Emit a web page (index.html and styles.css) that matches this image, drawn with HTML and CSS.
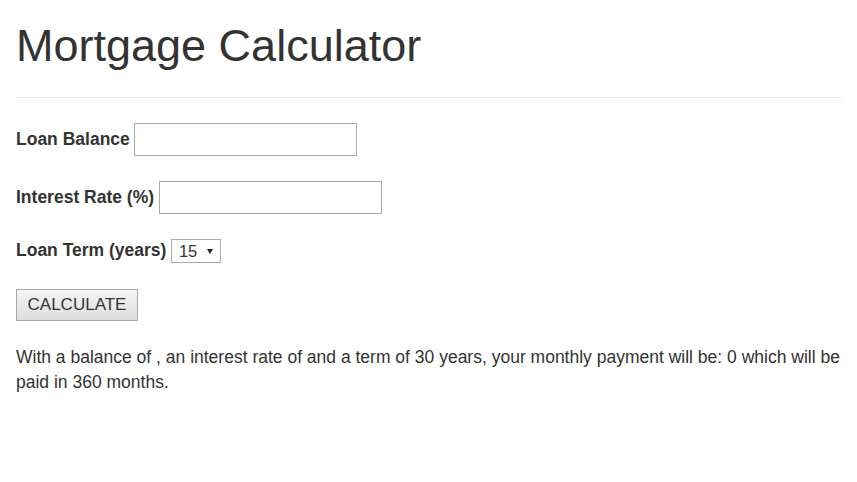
FILE: index.html
```html
<!DOCTYPE html>
<html lang="en">
<head>
<meta charset="utf-8">
<title>Mortgage Calculator</title>
<link rel="stylesheet" href="styles.css">
</head>
<body>
<div class="container">
  <h1 class="title">Mortgage Calculator</h1>
  <hr class="rule">
  <form class="calc">
    <div class="row">
      <label class="lbl" for="balance">Loan Balance</label>
      <input class="field" id="balance" type="text">
    </div>
    <div class="row">
      <label class="lbl" for="rate">Interest Rate (%)</label>
      <input class="field" id="rate" type="text">
    </div>
    <div class="row row-term">
      <label class="lbl" for="term">Loan Term (years)</label>
      <span class="select-wrap">
        <select class="term" id="term">
          <option>15</option>
          <option>30</option>
        </select>
        <svg class="arrow" width="6" height="5" viewBox="0 0 6 5" aria-hidden="true"><path d="M0 0H6L3 5Z" fill="#222"/></svg>
      </span>
    </div>
    <button class="btn" type="button">CALCULATE</button>
  </form>
  <p class="result">With a balance of , an interest rate of and a term of 30 years, your monthly payment will be: 0 which will be paid in 360 months.</p>
</div>
</body>
</html>
```
FILE: styles.css
```css
html, body {
  margin: 0;
  padding: 0;
  background: #fff;
}
body {
  font-family: "Liberation Sans", Arial, Helvetica, sans-serif;
  font-size: 17.5px;
  line-height: 25px;
  color: #333;
}
.container {
  padding: 0 14px 0 16px;
}
.title {
  margin: 21px 0 26.5px;
  font-size: 45px;
  line-height: 49.5px;
  font-weight: normal;
  color: #333;
}
.rule {
  margin: 0;
  height: 0;
  border: 0;
  border-top: 1px solid #eee;
}
.calc {
  display: flex;
  flex-direction: column;
  align-items: flex-start;
  padding-top: 25px;
}
.row {
  display: flex;
  align-items: center;
  gap: 4.5px;
  margin-bottom: 25px;
}
.row + .row-term {
  margin-top: -1px;
}
.lbl {
  font-weight: bold;
  line-height: 25px;
}
.field {
  box-sizing: border-box;
  width: 223px;
  height: 33px;
  margin: 0;
  padding: 2px 4px;
  border: 1px solid #a9a9a9;
  background: #fff;
  font: inherit;
}
.select-wrap {
  position: relative;
  display: inline-block;
  height: 24px;
}
.term {
  box-sizing: border-box;
  width: 50px;
  height: 24px;
  margin: 0;
  padding: 0 0 0 7px;
  border: 1px solid #a9a9a9;
  border-radius: 0;
  background: #fff;
  -webkit-appearance: none;
  appearance: none;
  font-family: "Liberation Sans", Arial, sans-serif;
  font-size: 16.5px;
  line-height: 22px;
  color: #333;
}
.arrow {
  position: absolute;
  left: 36px;
  top: 10px;
  pointer-events: none;
}
.btn {
  box-sizing: border-box;
  width: 122px;
  height: 32px;
  margin: 1px 0 0;
  padding: 0;
  border: 1px solid #a8a8a8;
  border-radius: 0;
  background: linear-gradient(#f5f5f5, #dddddd);
  font-family: "Liberation Sans", Arial, sans-serif;
  font-size: 17px;
  color: #333;
}
.result {
  margin: 24px 0 0;
}
```
